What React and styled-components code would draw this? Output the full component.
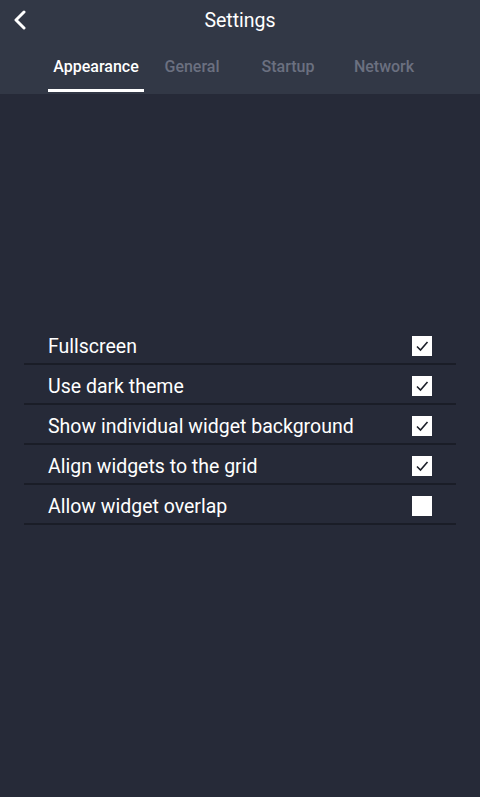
import React from 'react';
import styled, { createGlobalStyle } from 'styled-components';

const GlobalStyle = createGlobalStyle`
  html, body {
    margin: 0;
    padding: 0;
    background: #262a38;
  }
  body {
    font-family: Roboto, 'Liberation Sans', sans-serif;
  }
`;

const tabs = ['Appearance', 'General', 'Startup', 'Network'];

const options = [
  { label: 'Fullscreen', checked: true },
  { label: 'Use dark theme', checked: true },
  { label: 'Show individual widget background', checked: true },
  { label: 'Align widgets to the grid', checked: true },
  { label: 'Allow widget overlap', checked: false },
];

const App = () => {
  return (
    <Screen>
      <GlobalStyle />
      <Header>
        <TopBar>
          <BackButton aria-label="Back">
            <svg width="14" height="20" viewBox="0 0 14 20">
              <path d="M11 2 L3 10 L11 18" fill="none" stroke="#fff" strokeWidth="3" strokeLinecap="round" strokeLinejoin="round" />
            </svg>
          </BackButton>
          <Title>Settings</Title>
        </TopBar>
        <Tabs>
          {tabs.map((t, i) => (
            <Tab key={t} active={i === 0}>{t}</Tab>
          ))}
        </Tabs>
      </Header>
      <Content>
        <List>
          {options.map((o) => (
            <Row key={o.label}>
              <Label>{o.label}</Label>
              <Checkbox>
                {o.checked && (
                  <svg width="14" height="12" viewBox="0 0 14 12">
                    <path d="M2 6.5 L5.5 10 L12.5 2" fill="none" stroke="#1c1f29" strokeWidth="1.6" />
                  </svg>
                )}
              </Checkbox>
            </Row>
          ))}
        </List>
      </Content>
    </Screen>
  );
};

const Screen = styled.div`
  min-height: 797px;
  background: #262a38;
  display: flex;
  flex-direction: column;
`;
const Header = styled.div`
  background: #323846;
  height: 94px;
  display: flex;
  flex-direction: column;
`;
const TopBar = styled.div`
  position: relative;
  height: 40px;
  display: flex;
  align-items: center;
  justify-content: center;
`;
const BackButton = styled.button`
  position: absolute;
  left: 10px;
  top: 9px;
  width: 20px;
  height: 22px;
  padding: 0;
  border: 0;
  background: transparent;
  display: flex;
  align-items: center;
  justify-content: center;
`;
const Title = styled.h1`
  margin: 0;
  font-size: 19.5px;
  font-weight: 400;
  color: #ffffff;
`;
const Tabs = styled.div`
  display: flex;
  padding: 0 48px;
  height: 54px;
`;
const Tab = styled.div`
  width: 96px;
  display: flex;
  align-items: center;
  justify-content: center;
  font-size: 16px;
  font-weight: 500;
  color: ${(p) => (p.active ? '#ffffff' : '#6b7080')};
  box-sizing: border-box;
  padding-top: 4px;
  border-bottom: 3px solid ${(p) => (p.active ? '#ffffff' : 'transparent')};
  margin-bottom: 2px;
`;
const Content = styled.div`
  padding: 231px 24px 0;
`;
const List = styled.div`
  display: flex;
  flex-direction: column;
`;
const Row = styled.div`
  height: 40px;
  display: flex;
  align-items: center;
  justify-content: space-between;
  padding: 4px 24px 0;
  box-sizing: border-box;
  border-bottom: 2px solid #1a1d27;
`;
const Label = styled.span`
  font-size: 19.5px;
  color: #ffffff;
`;
const Checkbox = styled.div`
  width: 20px;
  height: 20px;
  background: #ffffff;
  display: flex;
  align-items: center;
  justify-content: center;
`;

export default App;
